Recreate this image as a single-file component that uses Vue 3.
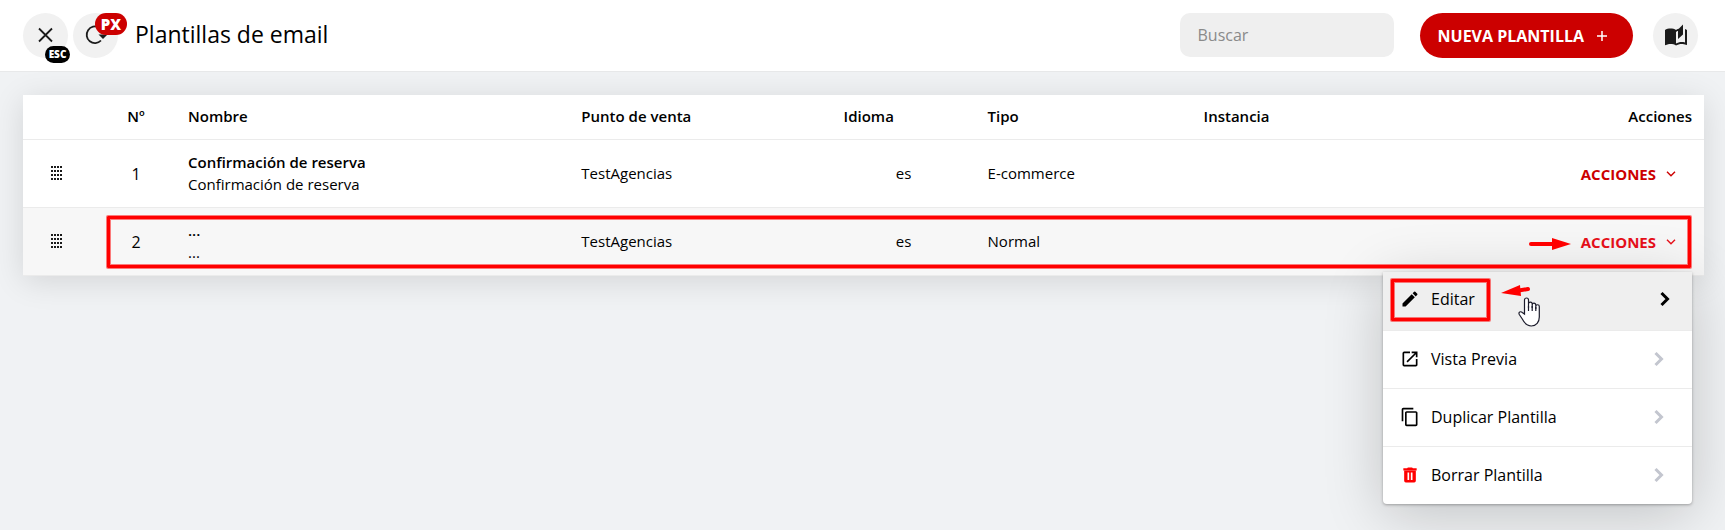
<script setup>
import { ref, computed } from 'vue'

const search = ref('')
const openMenu = ref(2)

const templates = ref([
	{ id: 1, name: 'Confirmación de reserva', subject: 'Confirmación de reserva', store: 'TestAgencias', lang: 'es', type: 'E-commerce', instance: '' },
	{ id: 2, name: '...', subject: '...', store: 'TestAgencias', lang: 'es', type: 'Normal', instance: '' }
])

const options = [
	{ key: 'edit', label: 'Editar' },
	{ key: 'preview', label: 'Vista Previa' },
	{ key: 'copy', label: 'Duplicar Plantilla' },
	{ key: 'delete', label: 'Borrar Plantilla' }
]

const filtered = computed(() => templates.value.filter((t) => {
	return t.name.toLowerCase().includes(search.value.toLowerCase())
}))

const toggleMenu = (id) => {
	openMenu.value = openMenu.value === id ? null : id
}
</script>

<template>
	<div class="app">

		<header class="topbar">

			<button class="round" aria-label="Cerrar">
				<svg width="24" height="24" viewBox="0 0 24 24"><path d="M5 4.500l13 13M18 4.500l-13 13" fill="none" stroke="#1b1b1b" stroke-width="1.800" /></svg>
				<span class="badge esc">ESC</span>
			</button>

			<button class="round" aria-label="Recargar">
				<svg width="24" height="24" viewBox="0 0 24 24">
					<path d="M15 3.500A8.300 8.300 0 1 0 17 16.500" fill="none" stroke="#1b1b1b" stroke-width="1.800" />
					<path d="M14.500 10.500h9l-4.500 4.500z" fill="#1b1b1b" />
				</svg>
				<span class="badge px">PX</span>
			</button>

			<h1>Plantillas de email</h1>

			<input v-model="search" class="search" type="text" placeholder="Buscar" aria-label="Buscar" />

			<button class="primary">
				NUEVA PLANTILLA
				<svg width="12" height="12" viewBox="0 0 12 12"><path d="M6 1v10M1 6h10" stroke="#fff" stroke-width="1.500" /></svg>
			</button>

			<button class="round" aria-label="Manual">
				<svg width="24" height="24" viewBox="0 0 24 24"><path fill="#1b1b1b" d="M17.500 4.500c-1.950 0-4.050.4-5.500 1.500-1.450-1.100-3.550-1.500-5.500-1.500S2.450 4.900 1 6v14.650c0 .65.730.450.750.450C3.100 20.450 5.050 20 6.500 20c1.950 0 4.050.4 5.500 1.500 1.350-.85 3.800-1.500 5.500-1.500 1.650 0 3.350.3 4.750 1.050.41.210.75-.19.750-.45V6c-.6-.45-1.250-.75-2-1V18.500c-1.100-.35-2.300-.5-3.500-.5-1.700 0-4.150.65-5.500 1.500V8l1-.8zM19 .5l-5 5V15l5-4.500z" /></svg>
			</button>

		</header>

		<main class="panel">

			<table>
				<thead>
					<tr>
						<th class="col-drag"></th>
						<th class="col-num">Nº</th>
						<th class="col-name">Nombre</th>
						<th class="col-store">Punto de venta</th>
						<th class="col-lang">Idioma</th>
						<th class="col-type">Tipo</th>
						<th>Instancia</th>
						<th class="col-actions">Acciones</th>
					</tr>
				</thead>
				<tbody>
					<tr v-for="t in filtered" :key="t.id" :class="{ active: openMenu === t.id }">
						<td class="handle">
							<svg class="drag" width="12" height="15" viewBox="0 0 12 15">
								<template v-for="y in 4" :key="y">
									<rect v-for="x in 4" :key="x" :x="(x - 1) * 3" :y="(y - 1) * 4" width="2" height="2" fill="#1b1b1b" />
								</template>
							</svg>
						</td>
						<td class="num">{{ t.id }}</td>
						<td>
							<b>{{ t.name }}</b><br>
							{{ t.subject }}
						</td>
						<td>{{ t.store }}</td>
						<td class="lang">{{ t.lang }}</td>
						<td>{{ t.type }}</td>
						<td>{{ t.instance }}</td>
						<td class="actions">
							<button class="link" :aria-expanded="openMenu === t.id" @click="toggleMenu(t.id)">
								ACCIONES
								<svg width="10" height="6" viewBox="0 0 10 6"><path d="M1 .7l4 4 4-4" fill="none" stroke="currentColor" stroke-width="1.400" /></svg>
							</button>

							<ul v-if="openMenu === t.id" class="menu">
								<li v-for="o in options" :key="o.key">
									<button :class="['option', o.key]">
										<svg class="icon" width="20" height="20" viewBox="0 0 24 24">
											<path v-if="o.key === 'edit'" d="M3 17.250V21h3.750L17.810 9.940l-3.750-3.750L3 17.250zM20.710 7.040a1 1 0 0 0 0-1.410l-2.340-2.340a1 1 0 0 0-1.410 0l-1.830 1.830 3.750 3.750 1.830-1.830z" />
											<path v-else-if="o.key === 'preview'" d="M19 19H5V5h7V3H5a2 2 0 0 0-2 2v14a2 2 0 0 0 2 2h14c1.100 0 2-.9 2-2v-7h-2v7zM14 3v2h3.590l-9.830 9.830 1.410 1.410L19 6.410V10h2V3h-7z" />
											<path v-else-if="o.key === 'copy'" d="M16 1H4c-1.100 0-2 .9-2 2v14h2V3h12V1zm3 4H8c-1.100 0-2 .9-2 2v14c0 1.100.9 2 2 2h11c1.100 0 2-.9 2-2V7c0-1.100-.9-2-2-2zm0 16H8V7h11v14z" />
											<path v-else fill-rule="evenodd" d="M4 4h4.500l1-1h5l1 1H20v2.500H4zM5 7h14v12a2 2 0 0 1-2 2H7a2 2 0 0 1-2-2zM9 9v9h2V9zM13 9v9h2V9z" />
										</svg>
										<span>{{ o.label }}</span>
										<svg class="chevron" width="10" height="16" viewBox="0 0 10 16"><path d="M1.500 2l6 6-6 6" fill="none" stroke="currentColor" stroke-width="3" /></svg>
									</button>
								</li>
							</ul>
						</td>
					</tr>
				</tbody>
			</table>

			<!-- help marks over the row and the menu -->
			<div class="mark mark-row"></div>
			<div class="mark mark-edit"></div>
			<svg class="arrow arrow-row" width="42" height="12" viewBox="0 0 42 12">
				<path d="M2 6h24" stroke="#f00" stroke-width="4" stroke-linecap="round" />
				<path d="M23 0l19 6-19 6z" fill="#f00" />
			</svg>
			<svg class="arrow arrow-edit" width="30" height="14" viewBox="0 0 30 14">
				<path d="M15 7l12-2" stroke="#f00" stroke-width="4" stroke-linecap="round" />
				<path d="M0 9L19 1l1 11z" fill="#f00" />
			</svg>
			<svg class="hand" width="23" height="30" viewBox="0 0 23 30">
				<path d="M6.500 17V3a2 2 0 0 1 4 0v8V7a1.800 1.800 0 0 1 3.700 0v4V8a1.800 1.800 0 0 1 3.600 0v4-2.500a1.700 1.700 0 0 1 3.500 0V20c0 5-3 9-8 9-5 0-7-3-9-7L1.300 17.500c-1.300-2.500 1.500-3.500 3-2z" fill="#fff" stroke="#1b1b2b" stroke-width="1.200" />
				<path d="M10.500 9v5M14.200 9v5M17.800 10v4" stroke="#1b1b2b" stroke-width="1.200" />
			</svg>

		</main>

	</div>
</template>

<style>
body {
	background: #f0f2f4;
}
</style>

<style scoped>
.app {
	min-height: 100vh;
	font-family: "Open Sans", "Noto Sans", sans-serif;
	font-size: 15px;
	line-height: 22px;
	color: #000;
}

.app button,
.app input {
	font-family: inherit;
	border: none;
}

.topbar {
	display: flex;
	align-items: flex-start;
	height: 58px;
	padding: 13px 27px 0 23px;
	background: #fff;
	border-bottom: 1px solid #e8e9ea;
}

.round {
	position: relative;
	display: flex;
	align-items: center;
	justify-content: center;
	width: 45px;
	height: 45px;
	margin-right: 5px;
	padding: 0;
	border-radius: 50%;
	background: #f1f1f1;
}

.round:last-child {
	margin-right: 0;
}

.badge {
	position: absolute;
	color: #fff;
	font-weight: 800;
	text-align: center;
}

.esc {
	right: -2px;
	bottom: -5px;
	width: 25px;
	border-radius: 9px;
	background: #000;
	font-size: 10px;
	line-height: 17px;
}

.px {
	right: -9px;
	top: 0;
	width: 32px;
	border-radius: 11px;
	background: #c00;
	font-size: 15px;
	line-height: 22px;
}

h1 {
	flex: 1;
	margin: 0 0 0 12px;
	font-size: 23px;
	font-weight: 400;
	line-height: 42px;
}

.search {
	box-sizing: border-box;
	width: 214px;
	height: 44px;
	padding: 0 18px;
	border-radius: 10px;
	background: #efefef;
	font-size: 16px;
}

.search::placeholder {
	color: #8a8a8a;
}

.primary {
	display: flex;
	align-items: center;
	gap: 12px;
	height: 45px;
	margin: 0 20px 0 26px;
	padding: 0 25px 0 18px;
	border-radius: 23px;
	background: #c00;
	color: #fff;
	font-size: 16px;
	font-weight: 700;
}

.panel {
	position: relative;
	margin: 23px 21px 0 23px;
	background: #fff;
	box-shadow: 0 5px 30px rgba(0, 0, 0, 0.12);
}

table {
	width: 100%;
	table-layout: fixed;
	border-collapse: separate;
	border-spacing: 0;
}

th,
td {
	box-sizing: border-box;
	padding: 0 12px 2px;
	border-bottom: 1px solid #ebebeb;
	text-align: left;
}

th {
	height: 45px;
	font-weight: 600;
}

td {
	height: 68px;
}

b {
	font-weight: 600;
}

.col-drag {
	width: 73px;
}

.col-num {
	width: 80px;
	text-align: center;
}

.col-name {
	width: 23.4%;
}

.col-store {
	width: 15.6%;
}

.col-lang {
	width: 144px;
}

.col-type {
	width: 216px;
}

.col-actions {
	width: 200px;
	text-align: right;
}

.handle {
	padding: 0 0 0 28px;
}

.drag {
	display: block;
}

.num {
	padding: 0;
	font-size: 16px;
	text-align: center;
}

.lang {
	text-align: center;
}

.active td {
	background: #f7f7f7;
}

.actions {
	position: relative;
	text-align: right;
}

.link {
	display: inline-flex;
	align-items: center;
	gap: 10px;
	margin-right: 16px;
	padding: 4px 0 0;
	background: none;
	color: #c00;
	font-size: 15px;
	font-weight: 700;
}

.active .link {
	color: #e8101a;
}

.menu {
	position: absolute;
	top: 64px;
	right: 12px;
	width: 309px;
	margin: 0;
	padding: 0;
	list-style: none;
	background: #fff;
	border-radius: 0 0 4px 4px;
	box-shadow: 0 1px 3px rgba(0, 0, 0, 0.3), 0 10px 60px rgba(0, 0, 0, 0.2);
}

.menu li + li {
	border-top: 1px solid #ebebeb;
}

.option {
	display: flex;
	align-items: center;
	gap: 11px;
	width: 100%;
	height: 57px;
	padding: 0 28px 2px 17px;
	background: none;
	color: #000;
	font-size: 16px;
	text-align: left;
}

.option span {
	flex: 1;
}

.icon {
	fill: #000;
}

.chevron {
	color: #c3c6cf;
}

.edit {
	height: 58px;
	padding-right: 22px;
	padding-bottom: 4px;
	background: #efefef;
}

.edit .chevron {
	color: #000;
}

.delete .icon {
	fill: #f00;
}

.mark {
	position: absolute;
	border: 3px solid #f00;
	border-radius: 1px;
	box-shadow: 0 0 0 1px rgba(255, 0, 0, 0.5), inset 0 0 0 1px rgba(255, 0, 0, 0.5);
	pointer-events: none;
}

.mark-row {
	top: 121px;
	right: 13px;
	left: 84px;
	height: 46px;
}

.mark-edit {
	top: 184px;
	right: 214px;
	width: 93px;
	height: 36px;
}

.arrow,
.hand {
	position: absolute;
	pointer-events: none;
}

.arrow-row {
	top: 143px;
	right: 133px;
}

.arrow-edit {
	top: 189px;
	right: 173px;
}

.hand {
	top: 202px;
	right: 163px;
}
</style>
